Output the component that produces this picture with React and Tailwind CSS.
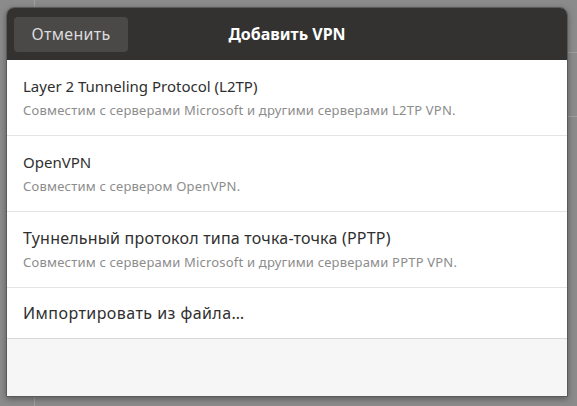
import React from "react";

const rows = [
  {
    title: "Layer 2 Tunneling Protocol (L2TP)",
    latin: true,
    sub: "Совместим с серверами Microsoft и другими серверами L2TP VPN.",
  },
  { title: "OpenVPN", latin: true, sub: "Совместим с сервером OpenVPN." },
  {
    title: "Туннельный протокол типа точка-точка (PPTP)",
    latin: false,
    sub: "Совместим с серверами Microsoft и другими серверами PPTP VPN.",
  },
];

export default function App() {
  return (
    <div
      className="relative w-[577px] h-[406px] overflow-hidden bg-[#8b8b8b] pt-[7px] pl-[6px] pr-[9px] pb-[9px]"
      style={{ fontFamily: '"Noto Sans", "Open Sans", sans-serif' }}
    >
      <div className="absolute left-[34px] top-0 h-full w-px bg-[#a0a0a0]" />
      <div className="absolute left-[568px] top-[52px] w-[9px] h-px bg-[#a0a0a0]" />
      <div className="absolute left-[568px] top-[116px] w-[9px] h-px bg-[#a0a0a0]" />
      <div className="relative flex h-full flex-col overflow-hidden rounded-t-[8px] border border-[#5a5a5a] shadow-[0_2px_6px_rgba(0,0,0,0.35)]">
        <div className="grid h-[52px] shrink-0 grid-cols-[1fr_auto_1fr] items-center bg-[#333231] px-[7px]">
          <div>
            <button className="flex h-[35px] w-[114px] items-center justify-center rounded-[4px] bg-[#4a4948] text-[16px] tracking-[0.3px] text-[#dcdcdc]">
              Отменить
            </button>
          </div>
          <div className="text-[16px] font-bold text-white">Добавить VPN</div>
          <div />
        </div>
        <div className="bg-white">
          {rows.map((r) => (
            <div
              key={r.title}
              className="flex h-[76px] flex-col justify-center gap-[6px] border-b border-[#e4e4e4] pl-[16px]"
            >
              <div
                className={
                  r.latin
                    ? "text-[15px] leading-[20px] text-[#2f2f2f]"
                    : "text-[16px] leading-[20px] tracking-[0.2px] text-[#2f2f2f]"
                }
              >
                {r.title}
              </div>
              <div className="text-[13px] leading-[17px] tracking-[0.2px] text-[#8c8c8c]">{r.sub}</div>
            </div>
          ))}
          <div className="flex h-[51px] items-center border-b border-[#d8d8d8] pl-[16px] text-[16px] tracking-[0.45px] text-[#2f2f2f]">
            Импортировать из файла…
          </div>
        </div>
        <div className="flex-1 bg-[#f6f6f6]" />
      </div>
    </div>
  );
}
